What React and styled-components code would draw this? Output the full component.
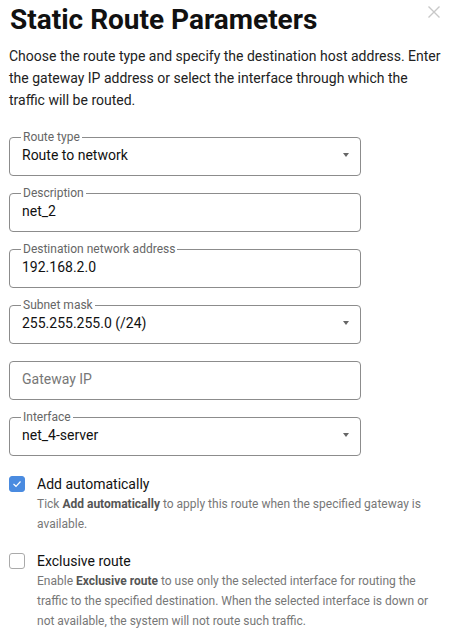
import React from "react";
import styled, { createGlobalStyle } from "styled-components";

const GlobalStyle = createGlobalStyle`
  body {
    margin: 0;
    background: #fff;
    font-family: Roboto, "Liberation Sans", Arial, sans-serif;
    color: #1a1a1a;
  }
`;

const fields = [
  { label: "Route type", value: "Route to network", select: true },
  { label: "Description", value: "net_2" },
  { label: "Destination network address", value: "192.168.2.0" },
  { label: "Subnet mask", value: "255.255.255.0 (/24)", select: true },
  { label: "", placeholder: "Gateway IP" },
  { label: "Interface", value: "net_4-server", select: true },
];

const App = () => {
  return (
    <StyledDialog>
      <GlobalStyle />
      <CloseButton aria-label='Close'>
        <svg width='12' height='12' viewBox='0 0 12 12'>
          <path d='M0.5 0.5 L11.5 11.5 M11.5 0.5 L0.5 11.5' stroke='#c8c8c8' strokeWidth='1.4' />
        </svg>
      </CloseButton>
      <Title>Static Route Parameters</Title>
      <Intro>
        Choose the route type and specify the destination host address. Enter the gateway IP address or select the
        interface through which the traffic will be routed.
      </Intro>
      <Form>
        {fields.map((f, i) => (
          <Field key={i}>
            <Legend $empty={!f.label}>{f.label}</Legend>
            <FieldRow>
              <Value $placeholder={!f.value}>{f.value || f.placeholder}</Value>
              {f.select && <Arrow />}
            </FieldRow>
          </Field>
        ))}
      </Form>
      <Options>
        <Option>
          <Box $checked>
            <svg width='10' height='8' viewBox='0 0 10 8'>
              <path d='M1.5 4 L4 6.3 L8.5 1.5' fill='none' stroke='#fff' strokeWidth='1.2' />
            </svg>
          </Box>
          <div>
            <OptionTitle>Add automatically</OptionTitle>
            <OptionHint>
              Tick <b>Add automatically</b> to apply this route when the specified gateway is available.
            </OptionHint>
          </div>
        </Option>
        <Option>
          <Box />
          <div>
            <OptionTitle>Exclusive route</OptionTitle>
            <OptionHint>
              Enable <b>Exclusive route</b> to use only the selected interface for routing the traffic to the specified
              destination. When the selected interface is down or not available, the system will not route such
              traffic.
            </OptionHint>
          </div>
        </Option>
      </Options>
    </StyledDialog>
  );
};

const StyledDialog = styled.div`
  position: relative;
  width: 450px;
  box-sizing: border-box;
  padding: 3px 9px 0 9px;
`;

const CloseButton = styled.div`
  position: absolute;
  top: 6px;
  right: 10px;
  width: 12px;
  height: 12px;
  display: flex;
`;

const Title = styled.h1`
  margin: 0;
  font-size: 28px;
  line-height: 34px;
  font-weight: 700;
  color: #111;
  padding-left: 1px;
`;

const Intro = styled.p`
  margin: 8px 0 0 0;
  font-size: 14px;
  line-height: 22px;
  color: #222;
`;

const Form = styled.div`
  display: flex;
  flex-direction: column;
  gap: 10px;
  width: 352px;
  margin-top: 19px;
`;

const Field = styled.fieldset`
  margin: 0;
  padding: 0 11px 9px 12px;
  border: 1px solid #8c8c8c;
  border-radius: 4px;
  min-width: 0;
`;

const Legend = styled.legend`
  height: 14px;
  font-size: 12px;
  line-height: 14px;
  color: #666;
  padding: ${(props) => (props.$empty ? "0" : "0 2px")};
  margin-left: -1px;
`;

const FieldRow = styled.div`
  display: flex;
  align-items: center;
  justify-content: space-between;
  height: 22px;
`;

const Value = styled.span`
  font-size: 14px;
  line-height: 22px;
  color: ${(props) => (props.$placeholder ? "#777" : "#111")};
`;

const Arrow = styled.span`
  width: 0;
  height: 0;
  border-left: 3.5px solid transparent;
  border-right: 3.5px solid transparent;
  border-top: 4px solid #666;
`;

const Options = styled.div`
  display: flex;
  flex-direction: column;
  gap: 18px;
  margin-top: 19px;
`;

const Option = styled.div`
  display: flex;
  gap: 12px;
  align-items: flex-start;
`;

const Box = styled.span`
  flex: none;
  width: 16px;
  height: 16px;
  box-sizing: border-box;
  margin-top: 1px;
  border-radius: 3px;
  border: 1px solid ${(props) => (props.$checked ? "#4a8be0" : "#aaa")};
  background: ${(props) => (props.$checked ? "#4a8be0" : "#fff")};
  display: flex;
  align-items: center;
  justify-content: center;
`;

const OptionTitle = styled.div`
  font-size: 14px;
  line-height: 18px;
  color: #111;
`;

const OptionHint = styled.div`
  font-size: 12px;
  line-height: 20px;
  color: #777;
  margin-top: 1px;
  b {
    color: #555;
  }
`;

export default App;
